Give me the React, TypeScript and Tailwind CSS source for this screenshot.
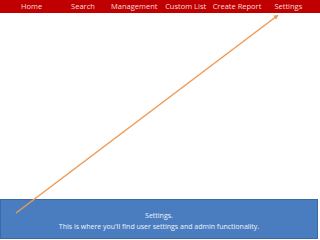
import React from "react";

const navItems = ["Home", "Search", "Management", "Custom List", "Create Report", "Settings"];

export default function App() {
  return (
    <div
      className="relative flex h-[240px] w-[320px] flex-col overflow-hidden bg-white"
      style={{ fontFamily: '"Open Sans", "Liberation Sans", sans-serif' }}
    >
      <div className="grid h-[13px] grid-cols-6 items-center bg-[#c00000] px-[6px] text-[7.5px] leading-none text-[#f6dcdc]">
        {navItems.map((n) => (
          <span key={n} className="text-center whitespace-nowrap">
            {n}
          </span>
        ))}
      </div>

      <div className="flex-1" />

      <div className="mb-[1px] mr-[2px] flex h-[40px] flex-col items-center justify-center border border-[#3a6aa6] bg-[#4a7dbf] pt-[3px] text-[7px] leading-[11px] text-[#eef3fb]">
        <p>Settings.</p>
        <p>This is where you&apos;ll find user settings and admin functionality.</p>
      </div>

      <svg className="pointer-events-none absolute inset-0" width="320" height="240" viewBox="0 0 320 240">
        <defs>
          <marker id="head" markerWidth="5" markerHeight="5" refX="3" refY="2.5" orient="auto" markerUnits="userSpaceOnUse">
            <path d="M0,0 L5,2.5 L0,5 z" fill="#ee9a55" />
          </marker>
        </defs>
        <line x1="16" y1="213" x2="277" y2="16" stroke="#ee9a55" strokeWidth="1.5" markerEnd="url(#head)" />
      </svg>
    </div>
  );
}
